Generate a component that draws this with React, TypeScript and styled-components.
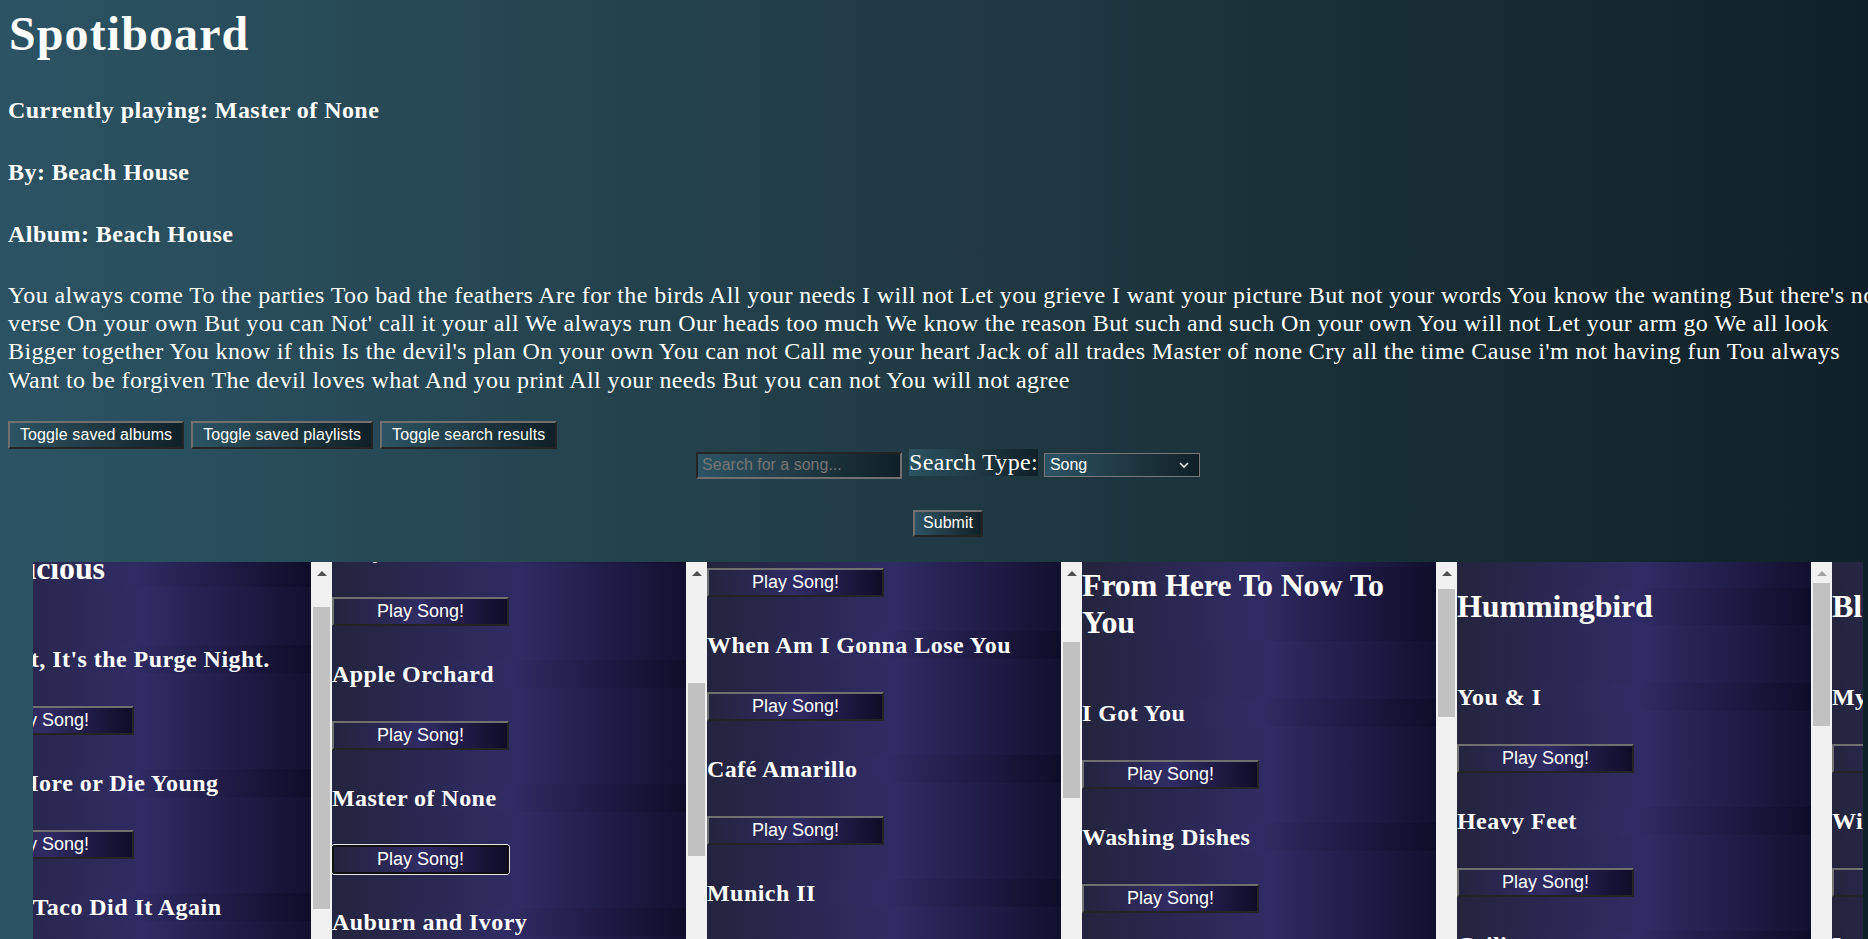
import React, { useCallback, useLayoutEffect, useRef, useState } from "react";
import styled, { createGlobalStyle, css } from "styled-components";

const teal = "linear-gradient(to right, #2c5364, #203a43, #0f2027)";
const violet = "linear-gradient(to right, #24243e, #302b63, #0f0c29)";
const sans = `"Liberation Sans", Arial, sans-serif`;
const ARROW = 21;

const GlobalStyle = createGlobalStyle`
  html, body { margin: 0; padding: 0; overflow: hidden; }
  html { background: #0f2027; }
  body {
    font-family: "Liberation Serif", "Times New Roman", serif;
    color: #ffffff;
  }
`;

const Page = styled.div`
  width: 1880px;
  min-height: 939px;
  padding: 8px;
  background: ${teal};
`;

const Title = styled.h1`
  margin: 0;
  padding: 2px 0 0 1px;
  font-size: 48px;
  line-height: 48px;
  font-weight: 700;
  letter-spacing: 1.1px;
`;

const InfoLine = styled.h2<{ $first?: boolean }>`
  margin: ${(p) => (p.$first ? "38px" : "34px")} 0 0;
  font-size: 24px;
  line-height: 28px;
  font-weight: 700;
  letter-spacing: 0.45px;
`;

const Lyrics = styled.p`
  margin: 33px 0 0;
  font-size: 24px;
  line-height: 28.2px;
  letter-spacing: 0.38px;
`;

const ToggleRow = styled.div`
  display: flex;
  gap: 7px;
  margin-top: 27px;
`;

const RaisedButton = styled.button`
  box-sizing: border-box;
  height: 28px;
  padding: 0 10px;
  border: 2px solid;
  border-color: #707070 #242424 #242424 #707070;
  background: ${teal};
  color: #ffffff;
  font-family: ${sans};
  font-size: 16px;
  letter-spacing: 0.1px;
  cursor: pointer;
`;

const SearchForm = styled.form`
  display: flex;
  flex-direction: column;
  align-items: center;
`;

const SearchRow = styled.div`
  display: flex;
  align-items: flex-start;
`;

const SearchInput = styled.input`
  box-sizing: border-box;
  width: 206px;
  height: 27px;
  margin: 3px 0 0;
  padding: 0 4px;
  border: 2px solid;
  border-color: #242424 #707070 #707070 #242424;
  background: ${teal};
  color: #ffffff;
  font-family: ${sans};
  font-size: 16px;
  &::placeholder {
    color: #757575;
  }
`;

const TypeLabel = styled.label`
  margin-left: 7px;
  font-size: 24px;
  line-height: 27.6px;
  letter-spacing: 0.3px;
  background: ${teal};
`;

const SelectWrap = styled.div`
  position: relative;
  margin: 4px 0 0 6px;
`;

const TypeSelect = styled.select`
  appearance: none;
  box-sizing: border-box;
  width: 156px;
  height: 24px;
  padding: 0 24px 0 5px;
  border: 1px solid #767676;
  border-radius: 0;
  background: ${teal};
  color: #ffffff;
  font-family: ${sans};
  font-size: 16px;
`;

const Chevron = styled.svg`
  position: absolute;
  right: 11px;
  top: 9px;
  pointer-events: none;
`;

const SubmitButton = styled(RaisedButton)`
  margin-top: 31px;
  height: 27px;
  padding: 0 8px;
  letter-spacing: 0;
`;

const Shelf = styled.div`
  display: flex;
  margin: 25px 25px 0;
  overflow: hidden;
`;

const AlbumColumn = styled.div`
  flex: 0 0 375px;
  display: flex;
  height: 470px;
  background: ${violet};
`;

const TrackViewport = styled.div`
  flex: 1 1 auto;
  min-width: 0;
  overflow-x: hidden;
  overflow-y: auto;
  scrollbar-width: none;
  &::-webkit-scrollbar {
    display: none;
  }
`;

const TrackList = styled.div`
  display: flow-root;
  padding-bottom: 50px;
`;

const Rail = styled.div`
  flex: 0 0 ${ARROW}px;
  display: flex;
  flex-direction: column;
  background: #f1f1f1;
`;

const RailArrow = styled.div<{ $dir: "up" | "down"; $dim: boolean }>`
  box-sizing: border-box;
  flex: 0 0 ${ARROW}px;
  display: flex;
  justify-content: center;
  padding-top: ${(p) => (p.$dir === "up" ? "9px" : "8px")};
  &::before {
    content: "";
    width: 0;
    height: 0;
    border-left: 5px solid transparent;
    border-right: 5px solid transparent;
    ${(p) =>
      p.$dir === "up"
        ? `border-bottom: 5px solid ${p.$dim ? "#a3a3a3" : "#505050"};`
        : `border-top: 5px solid ${p.$dim ? "#a3a3a3" : "#505050"};`}
  }
`;

const RailTrack = styled.div`
  flex: 1 1 auto;
  display: flex;
  flex-direction: column;
  min-height: 0;
`;

const RailThumb = styled.div`
  flex: none;
  margin: 0 2px;
  background: #c1c1c1;
`;

const AlbumName = styled.h1`
  margin: 26px 0 58px;
  font-size: 32px;
  line-height: 37px;
  font-weight: 700;
  letter-spacing: -0.15px;
  background: ${violet};
`;

const SongName = styled.h2`
  margin: 0;
  font-size: 24px;
  line-height: 28px;
  font-weight: 700;
  letter-spacing: 0.45px;
  background: ${violet};
`;

const PlayButton = styled.button<{ $playing?: boolean }>`
  display: block;
  box-sizing: border-box;
  width: 50%;
  height: 29px;
  margin: 33px 0 34px;
  padding: 0;
  border: 2px solid;
  border-color: #707070 #242424 #242424 #707070;
  background: ${violet};
  color: #ffffff;
  font-family: ${sans};
  font-size: 18px;
  cursor: pointer;
  ${(p) =>
    p.$playing &&
    css`
      border-color: #101010;
      border-radius: 3px;
      box-shadow: 0 0 0 1px #e6e6e6;
    `}
`;

type Album = {
  title: string;
  scroll: number;
  songs: string[];
  playing?: string;
};

const albums: Album[] = [
  {
    title: "Auspicious",
    scroll: 38,
    songs: [
      "Tonight, It's the Purge Night.",
      "Love More or Die Young",
      "Whoa, Taco Did It Again",
      "Midnight Snack Attack",
    ],
  },
  {
    title: "Beach House",
    scroll: 271,
    playing: "Master of None",
    songs: [
      "Saltwater",
      "Tokyo Witch",
      "Apple Orchard",
      "Master of None",
      "Auburn and Ivory",
      "Childhood",
      "Heart and Lungs",
      "Home Again",
    ],
  },
  {
    title: "Violet Street",
    scroll: 176,
    songs: [
      "Vogue",
      "When Am I Gonna Lose You",
      "Café Amarillo",
      "Munich II",
      "Someday Now",
      "Megaton Mile",
      "Tap Dancer",
      "Shy",
      "Gulf Shores",
    ],
  },
  {
    title: "From Here To Now To You",
    scroll: 21,
    songs: [
      "I Got You",
      "Washing Dishes",
      "Shot Reverse Shot",
      "You Remind Me of You",
      "Radiate",
      "Tape Deck",
      "Don't Believe a Thing I Say",
      "Never Fade",
      "As I Was Saying",
      "Ones and Zeros",
      "Change",
    ],
  },
  {
    title: "Hummingbird",
    scroll: 0,
    songs: [
      "You & I",
      "Heavy Feet",
      "Ceilings",
      "Black Spot",
      "Breakers",
      "Three Months",
      "Black Balloons",
      "Wooly Mammoth",
      "Mt. Washington",
      "Colombia",
    ],
  },
  {
    title: "Blossom",
    scroll: 0,
    songs: [
      "My Girls",
      "Winter Sun",
      "In the Morning",
      "Summer Haze",
      "Slow Dancer",
      "Golden Hour",
      "Night Drive",
      "Afterglow",
    ],
  },
];

const lyrics =
  "You always come To the parties Too bad the feathers Are for the birds All your needs I will not Let you grieve I want your picture But not your words You know the wanting But there's no verse On your own But you can Not' call it your all We always run Our heads too much We know the reason But such and such On your own You will not Let your arm go We all look Bigger together You know if this Is the devil's plan On your own You can not Call me your heart Jack of all trades Master of none Cry all the time Cause i'm not having fun Tou always Want to be forgiven The devil loves what And you print All your needs But you can not You will not agree";

function AlbumPanel({ album }: { album: Album }) {
  const ref = useRef<HTMLDivElement>(null);
  const [thumb, setThumb] = useState({ top: 0, size: 0, atTop: album.scroll === 0 });

  const sync = useCallback(() => {
    const el = ref.current;
    if (!el) return;
    const track = el.clientHeight - 2 * ARROW;
    const size = Math.max(24, Math.round((track * el.clientHeight) / el.scrollHeight));
    const range = el.scrollHeight - el.clientHeight;
    const top = range > 0 ? Math.round(((track - size) * el.scrollTop) / range) : 0;
    setThumb({ top, size, atTop: el.scrollTop <= 0 });
  }, []);

  useLayoutEffect(() => {
    if (ref.current) ref.current.scrollTop = album.scroll;
    sync();
  }, [album.scroll, sync]);

  return (
    <AlbumColumn>
      <TrackViewport ref={ref} onScroll={sync}>
        <TrackList>
          <AlbumName>{album.title}</AlbumName>
          {album.songs.map((song) => (
            <React.Fragment key={song}>
              <SongName>{song}</SongName>
              <PlayButton type="button" $playing={song === album.playing}>
                Play Song!
              </PlayButton>
            </React.Fragment>
          ))}
        </TrackList>
      </TrackViewport>
      <Rail aria-hidden="true">
        <RailArrow $dir="up" $dim={thumb.atTop} />
        <RailTrack>
          <RailThumb style={{ marginTop: thumb.top, height: thumb.size }} />
        </RailTrack>
        <RailArrow $dir="down" $dim={false} />
      </Rail>
    </AlbumColumn>
  );
}

export default function App() {
  const shelfRef = useRef<HTMLDivElement>(null);
  useLayoutEffect(() => {
    if (shelfRef.current) shelfRef.current.scrollLeft = 76;
  }, []);

  return (
    <>
      <GlobalStyle />
      <Page>
        <Title>Spotiboard</Title>
        <InfoLine $first>Currently playing: Master of None</InfoLine>
        <InfoLine>By: Beach House</InfoLine>
        <InfoLine>Album: Beach House</InfoLine>
        <Lyrics>{lyrics}</Lyrics>

        <ToggleRow>
          <RaisedButton type="button">Toggle saved albums</RaisedButton>
          <RaisedButton type="button">Toggle saved playlists</RaisedButton>
          <RaisedButton type="button">Toggle search results</RaisedButton>
        </ToggleRow>

        <SearchForm onSubmit={(e) => e.preventDefault()}>
          <SearchRow>
            <SearchInput type="text" placeholder="Search for a song..." />
            <TypeLabel htmlFor="search-type">Search Type:</TypeLabel>
            <SelectWrap>
              <TypeSelect id="search-type" defaultValue="Song">
                <option>Song</option>
                <option>Album</option>
                <option>Artist</option>
              </TypeSelect>
              <Chevron width="10" height="6" viewBox="0 0 10 6">
                <polyline
                  points="1,1 5,5 9,1"
                  fill="none"
                  stroke="#ffffff"
                  strokeWidth="1.6"
                />
              </Chevron>
            </SelectWrap>
          </SearchRow>
          <SubmitButton type="submit">Submit</SubmitButton>
        </SearchForm>

        <Shelf ref={shelfRef}>
          {albums.map((a) => (
            <AlbumPanel key={a.title} album={a} />
          ))}
        </Shelf>
      </Page>
    </>
  );
}
